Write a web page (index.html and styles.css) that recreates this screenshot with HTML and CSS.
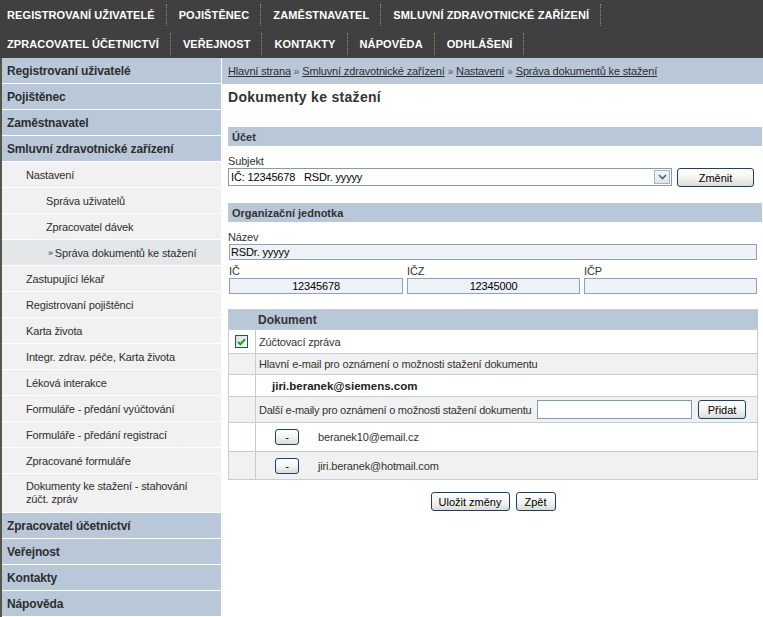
FILE: index.html
```html
<!DOCTYPE html>
<html lang="cs">
<head>
<meta charset="utf-8">
<title>Dokumenty ke stažení</title>
<link rel="stylesheet" href="styles.css">
</head>
<body>
<div class="topnav">
  <div class="navrow">
    <a href="#">Registrovaní uživatelé</a>
    <a href="#">Pojištěnec</a>
    <a href="#">Zaměstnavatel</a>
    <a href="#">Smluvní zdravotnické zařízení</a>
  </div>
  <div class="navrow">
    <a href="#">Zpracovatel účetnictví</a>
    <a href="#">Veřejnost</a>
    <a href="#">Kontakty</a>
    <a href="#">Nápověda</a>
    <a href="#">Odhlášení</a>
  </div>
</div>
<div class="layout">
  <ul class="sidebar">
    <li class="side-item side-head">Registrovaní uživatelé</li>
    <li class="side-item side-head">Pojištěnec</li>
    <li class="side-item side-head">Zaměstnavatel</li>
    <li class="side-item side-head">Smluvní zdravotnické zařízení</li>
    <li class="side-item side-sub lvl1">Nastavení</li>
    <li class="side-item side-sub lvl2">Správa uživatelů</li>
    <li class="side-item side-sub lvl2">Zpracovatel dávek</li>
    <li class="side-item side-sub lvl2 active"><span class="raquo">»</span>Správa dokumentů ke stažení</li>
    <li class="side-item side-sub lvl1">Zastupující lékař</li>
    <li class="side-item side-sub lvl1">Registrovaní pojištěnci</li>
    <li class="side-item side-sub lvl1">Karta života</li>
    <li class="side-item side-sub lvl1">Integr. zdrav. péče, Karta života</li>
    <li class="side-item side-sub lvl1">Léková interakce</li>
    <li class="side-item side-sub lvl1">Formuláře - předání vyúčtování</li>
    <li class="side-item side-sub lvl1">Formuláře - předání registrací</li>
    <li class="side-item side-sub lvl1">Zpracované formuláře</li>
    <li class="side-item side-sub lvl1 twoline">Dokumenty ke stažení - stahování zúčt. zpráv</li>
    <li class="side-item side-head">Zpracovatel účetnictví</li>
    <li class="side-item side-head">Veřejnost</li>
    <li class="side-item side-head">Kontakty</li>
    <li class="side-item side-head">Nápověda</li>
  </ul>
  <div class="main">
    <div class="breadcrumb">
      <a href="#">Hlavní strana</a><span class="bsep">»</span><a href="#">Smluvní zdravotnické zařízení</a><span class="bsep">»</span><a href="#">Nastavení</a><span class="bsep">»</span><a href="#">Správa dokumentů ke stažení</a>
    </div>
    <div class="content">
      <h1 class="title">Dokumenty ke stažení</h1>

      <div class="section-head">Účet</div>
      <div class="label">Subjekt</div>
      <div class="subject-row">
        <div class="select">
          <span class="select-text">IČ: 12345678&nbsp;&nbsp; RSDr. yyyyy</span>
          <span class="select-arrow"><svg width="9" height="6" viewBox="0 0 9 6"><path d="M1 1 L4.5 4.5 L8 1" fill="none" stroke="#4d6185" stroke-width="1.6"/></svg></span>
        </div>
        <button class="btn btn-change">Změnit</button>
      </div>

      <div class="section-head section-org">Organizační jednotka</div>
      <div class="label">Název</div>
      <div class="field field-wide">RSDr. yyyyy</div>
      <div class="id-grid">
        <div class="id-col"><div class="label label-id">IČ</div><div class="field field-center">12345678</div></div>
        <div class="id-col"><div class="label label-id">IČZ</div><div class="field field-center">12345000</div></div>
        <div class="id-col"><div class="label label-id">IČP</div><div class="field field-center"></div></div>
      </div>

      <table class="doc-table">
        <tr class="doc-head"><td class="c1"></td><td class="c2">Dokument</td></tr>
        <tr class="r-check"><td class="c1"><span class="checkbox"><svg width="9" height="8" viewBox="0 0 9 8"><path d="M1 4 L3.3 6.3 L8 1.2" fill="none" stroke="#21a121" stroke-width="2"/></svg></span></td><td class="c2">Zúčtovací zpráva</td></tr>
        <tr class="r-main gray"><td class="c1"></td><td class="c2">Hlavní e-mail pro oznámení o možnosti stažení dokumentu</td></tr>
        <tr class="r-email"><td class="c1"></td><td class="c2"><span class="main-email">jiri.beranek@siemens.com</span></td></tr>
        <tr class="r-add gray"><td class="c1"></td><td class="c2"><div class="add-row"><span class="add-text">Další e-maily pro oznámení o možnosti stažení dokumentu</span><span class="add-input"></span><button class="btn btn-add">Přidat</button></div></td></tr>
        <tr class="r-item"><td class="c1"></td><td class="c2"><div class="item-row"><button class="btn btn-minus">-</button><span>beranek10@email.cz</span></div></td></tr>
        <tr class="r-item2 gray"><td class="c1"></td><td class="c2"><div class="item-row"><button class="btn btn-minus">-</button><span>jiri.beranek@hotmail.com</span></div></td></tr>
      </table>

      <div class="actions">
        <button class="btn btn-save">Uložit změny</button>
        <button class="btn btn-back">Zpět</button>
      </div>
    </div>
  </div>
</div>
</body>
</html>
```

FILE: styles.css
```css
* { box-sizing: border-box; }
body {
  margin: 0;
  font-family: "Liberation Sans", Arial, sans-serif;
  font-size: 11px;
  letter-spacing: -0.15px;
  color: #2e2e2e;
  background: #fff;
  width: 763px;
  height: 617px;
  overflow: hidden;
}
.topnav {
  background: #404040;
}
.navrow {
  display: flex;
  align-items: center;
  height: 29px;
}
.navrow a {
  color: #fff;
  font-weight: bold;
  font-size: 11px;
  letter-spacing: 0.1px;
  text-transform: uppercase;
  text-decoration: none;
  line-height: 22px;
  padding: 0 11px 0 12px;
  border-right: 1px dotted #8c8c8c;
}
.navrow a:first-child { padding-left: 7px; }

.layout { display: flex; }
.sidebar {
  list-style: none;
  margin: 0;
  padding: 0;
  width: 222px;
  flex: none;
  border-left: 2px solid #56564c;
  border-right: 1px solid #fff;
}
.side-item {
  height: 26px;
  border-bottom: 1px solid #fff;
  display: flex;
  align-items: center;
  padding-left: 5px;
}
.side-head {
  background: #b8c8d8;
  font-weight: bold;
  font-size: 12px;
  color: #2e2e2e;
}
.side-sub { background: #f1f1f1; color: #2e2e2e; }
.side-sub.lvl1 { padding-left: 24px; }
.side-sub.lvl2 { padding-left: 44px; }
.side-sub.active { background: #e4e7ea; padding-left: 46px; }
.raquo { font-size: 9px; margin-right: 2px; }
.side-item.twoline {
  height: 39px;
  line-height: 13px;
  padding-right: 20px;
}

.main { flex: 1; min-width: 0; }
.breadcrumb {
  background: #b8c8d8;
  height: 26px;
  display: flex;
  align-items: center;
  padding-left: 6px;
}
.breadcrumb a { color: #2e2e2e; text-decoration: underline; }
.bsep { color: #555; margin: 0 3px; font-size: 10px; }
.content { padding: 0 1px 0 6px; }
.title {
  margin: 0;
  padding-top: 5px;
  font-size: 14px;
  letter-spacing: 0.3px;
  line-height: 17px;
  font-weight: bold;
  color: #333;
  margin-bottom: 21px;
}
.section-head {
  background: #b8c8d8;
  height: 19px;
  display: flex;
  align-items: center;
  padding-left: 4px;
  font-weight: bold;
  font-size: 11px;
  letter-spacing: 0;
  color: #333;
}
.label {
  margin-top: 8px;
  line-height: 14px;
  height: 14px;
  color: #333;
}
.label.label-id { margin-top: 4px; }
.subject-row {
  display: flex;
  align-items: flex-start;
  gap: 5px;
}
.select {
  width: 444px;
  height: 18px;
  border: 1px solid #7f9db9;
  background: #fff;
  display: flex;
  align-items: center;
  justify-content: space-between;
  padding-left: 2px;
  color: #000;
}
.select-arrow {
  width: 16px;
  height: 14px;
  margin-right: 1px;
  border: 1px solid #a8b4c4;
  background: linear-gradient(#f4f6f9, #dfe4ea);
  display: flex;
  align-items: center;
  justify-content: center;
}
.btn {
  font-family: "Liberation Sans", Arial, sans-serif;
  font-size: 11px;
  color: #000;
  border: 1px solid #1a3f75;
  border-radius: 3px;
  background: linear-gradient(#ffffff 0%, #f4f4f2 50%, #dcdcd6 100%);
  padding: 0;
  cursor: pointer;
}
.btn-change { width: 77px; height: 19px; }
.section-org { margin-top: 16px; }
.field {
  height: 16px;
  border: 1px solid #8da3bd;
  background: #eef1f5;
  color: #000;
  line-height: 14px;
  padding-left: 1px;
}
.field-wide { margin-left: 1px; width: 528px; }
.field-center { text-align: center; padding-left: 0; }
.id-grid {
  margin-left: 1px;
  width: 528px;
  display: grid;
  grid-template-columns: 174px 173px 173px;
  gap: 4px;
}
.doc-table {
  margin-top: 15px;
  width: 530px;
  border-collapse: collapse;
  border: 1px solid #c3ced9;
}
.doc-table td {
  border: 1px solid #c3ced9;
  padding: 0;
  vertical-align: middle;
  color: #333;
}
.doc-table .c1 { width: 27px; }
.doc-table .c2 { padding-left: 3px; }
.doc-head td {
  background: #b8c8d8;
  height: 20px;
  font-weight: bold;
  font-size: 12px;
  letter-spacing: 0;
  border-left-color: #b8c8d8;
  border-right-color: #b8c8d8;
}
.doc-head .c2 { padding-left: 2px; }
.gray td { background: #f1f1f1; }
.r-check td { height: 24px; }
.r-main td { height: 21px; }
.r-email td { height: 22px; }
.r-add td { height: 26px; }
.r-item td { height: 29px; }
.r-item2 td { height: 28px; }
.checkbox {
  display: flex;
  align-items: center;
  justify-content: center;
  width: 13px;
  height: 13px;
  margin-left: 6px;
  border: 1px solid #1c5180;
  background: linear-gradient(135deg, #dcdcd7, #ffffff);
}
.main-email {
  font-weight: bold;
  font-size: 11.5px;
  letter-spacing: 0;
  color: #222;
  padding-left: 13px;
}
.add-row { display: flex; align-items: center; padding-right: 11px; }
.add-text { white-space: nowrap; letter-spacing: -0.25px; }
.add-input {
  margin-left: 6px;
  flex: 1;
  min-width: 0;
  height: 19px;
  border: 1px solid #7f9db9;
  background: #fff;
}
.btn-add { margin-left: 6px; width: 48px; height: 19px; flex: none; }
.item-row { display: flex; align-items: center; }
.btn-minus { margin-left: 16px; width: 24px; height: 16px; }
.item-row span { margin-left: 19px; color: #333; }
.actions {
  width: 530px;
  display: flex;
  justify-content: center;
  gap: 6px;
  margin-top: 12px;
}
.btn-save { width: 79px; height: 19px; }
.btn-back { width: 40px; height: 19px; }
```
